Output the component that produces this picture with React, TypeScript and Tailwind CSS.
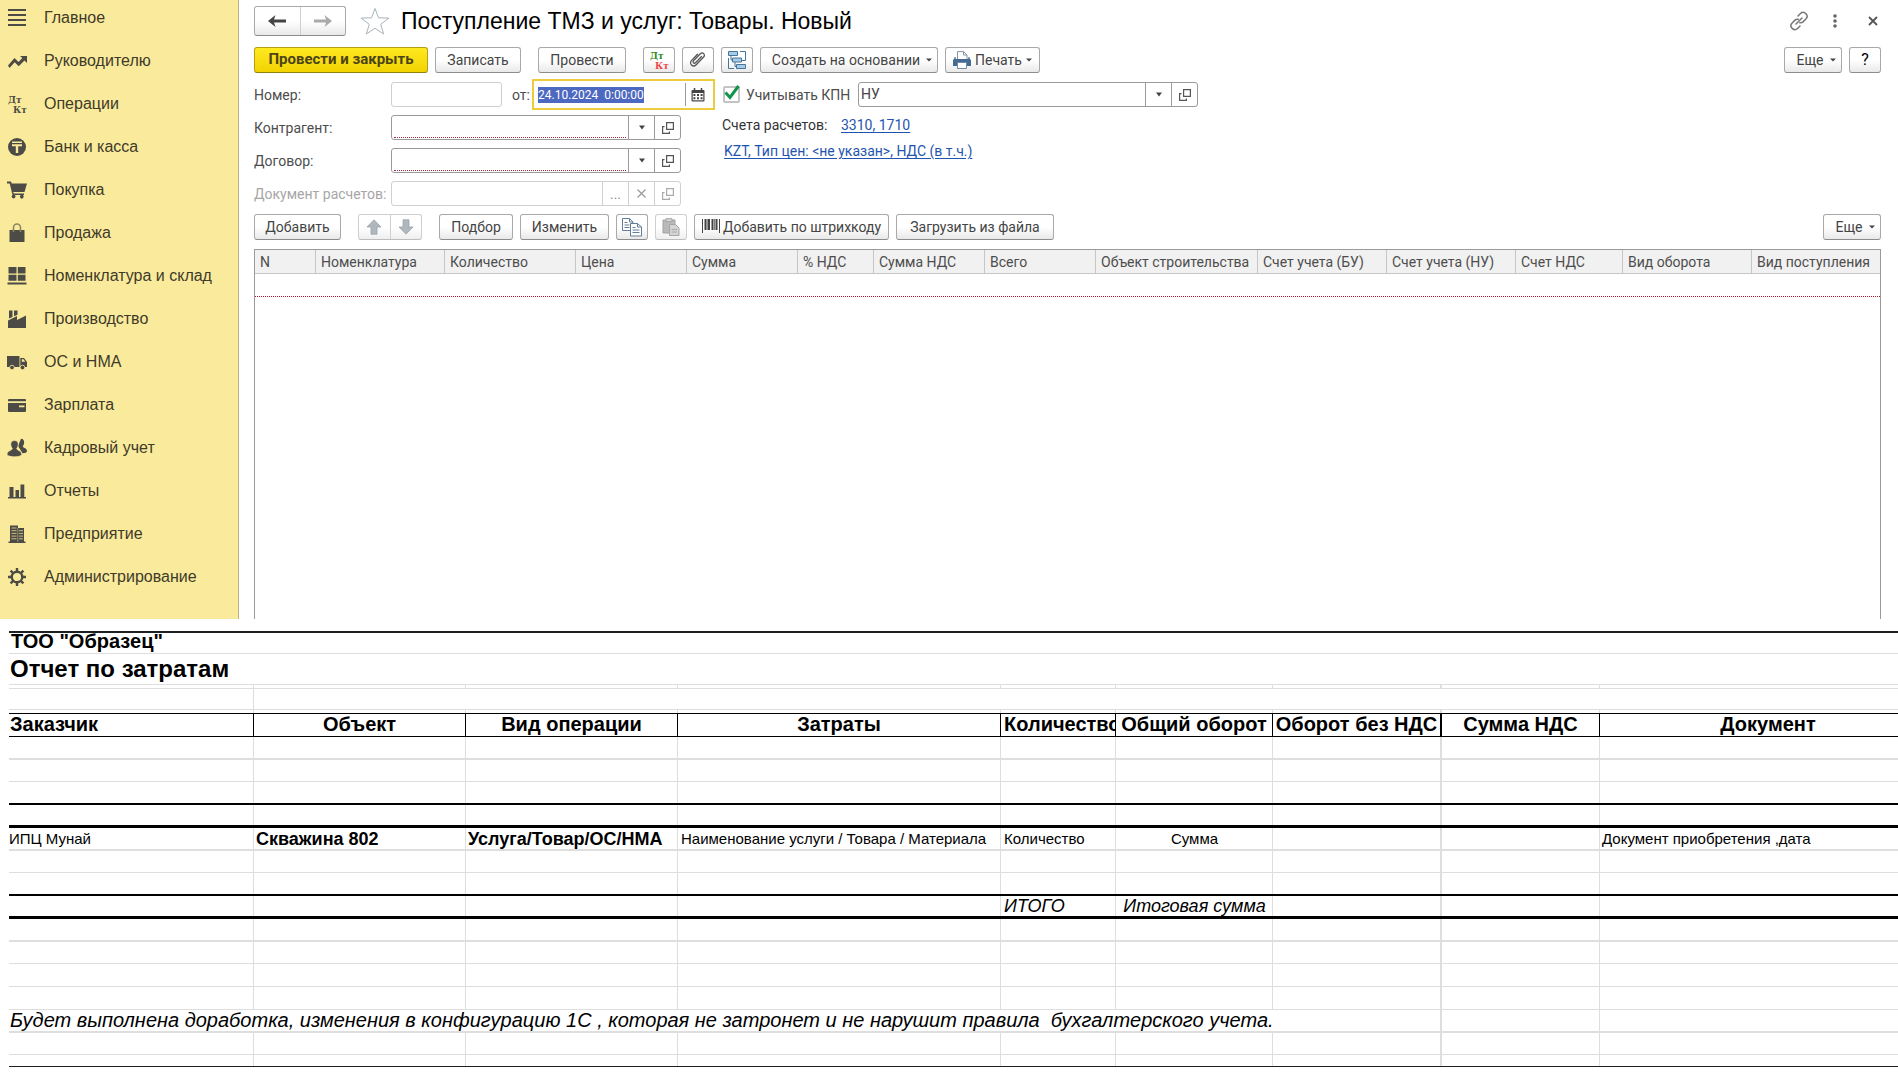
import { useEffect, useRef } from 'react'
import type { ReactNode } from 'react'

const BTN = 'flex h-[26px] shrink-0 items-center justify-center rounded-[3px] border border-[#a9a9a9] border-b-[#8c8c8c] bg-linear-to-b from-white from-50% to-[#e9e9e9] whitespace-nowrap text-[#444]'
const BTN_OFF = 'flex h-[26px] shrink-0 items-center justify-center rounded-[3px] border border-[#cfcfcf] border-b-[#bdbdbd] bg-linear-to-b from-white from-50% to-[#efefef]'

function MenuIcon({ children }: { children: ReactNode }) {
  return (
    <svg viewBox="0 0 20 20" className="h-5 w-5 shrink-0" fill="#4d4b45" aria-hidden="true">
      {children}
    </svg>
  )
}

const menu: { label: string, icon: ReactNode }[] = [
  { label: 'Главное', icon: <path d="M1 1h18v2H1zM1 6h18v2H1zM1 11h18v2H1zM1 16h18v2H1z" /> },
  { label: 'Руководителю', icon: <path d="M1 14.500 7.500 7l4 4 3.800-3.900L13 5h7v7l-2.500-2.500-5.800 5.700-4-4L2.500 17z" /> },
  {
    label: 'Операции',
    icon: (
      <g fontFamily='"DejaVu Serif", "Liberation Serif", serif' fontSize="9" fontWeight="700">
        <text x="1" y="9">Дт</text>
        <text x="6" y="19">Кт</text>
      </g>
    ),
  },
  {
    label: 'Банк и касса',
    icon: (
      <>
        <circle cx="10" cy="10" r="9" />
        <path d="M5 4.500h10V6H5zM5 7.200h10v2h-3.800V16H8.800V9.200H5z" fill="#faeb9c" />
      </>
    ),
  },
  { label: 'Покупка', icon: <path d="M0 1.500h4l.8 2H20l-2.500 8.500H6.200l.5 1.500H17V15h-1.200a1.900 1.900 0 1 1-2 0H7.700a1.900 1.900 0 1 1-2.200 0L2.700 3.500H0z" /> },
  {
    label: 'Продажа',
    icon: (
      <>
        <path d="M2.500 7h15v12h-15z" />
        <path d="M6.500 9V4.500a3.500 3.500 0 0 1 7 0V9" fill="none" stroke="#8e865f" strokeWidth="1.600" />
      </>
    ),
  },
  { label: 'Номенклатура и склад', icon: <path d="M1.500 1h8v6.500h-8zM10.800 1h7.700v6.500h-7.700zM1.500 8.800h8v6h-8zM10.800 8.800h7.700v6h-7.700zM.5 16.500h19v2H.5z" /> },
  { label: 'Производство', icon: <path d="M2 1.500h3.500V8L2 9.500zM7 1.500h3.500v4.200L7 7.200zM1 11.500l9-4.500v4l9-4.500V19H1z" /> },
  {
    label: 'ОС и НМА',
    icon: (
      <>
        <path d="M0 4h12.500v11H0z" />
        <path d="M13.300 6h3.700l3 4v5h-6.700z" />
        <path d="M14.800 7.300h1.700l1.700 2.500h-3.400z" fill="#faeb9c" />
        <circle cx="5" cy="15.500" r="2.300" stroke="#faeb9c" strokeWidth="0.800" />
        <circle cx="15.500" cy="15.500" r="2.300" stroke="#faeb9c" strokeWidth="0.800" />
      </>
    ),
  },
  { label: 'Зарплата', icon: <path fillRule="evenodd" d="M2 4h16a1 1 0 0 1 1 1v1.200H1V5a1 1 0 0 1 1-1zM1 8h18v8a1 1 0 0 1-1 1H2a1 1 0 0 1-1-1zM12 10.500v1.700h5.500v-1.700z" /> },
  {
    label: 'Кадровый учет',
    icon: (
      <>
        <path d="M14 .8c2.300 0 3.400 1.700 3.100 4-.2 1.800-.8 2.800-1.400 3.500 0 1.500 4.300 1.800 4.300 4.700 0 1.500-2 2.300-4.500 2.200L11 8z" />
        <path d="M7.500 2.500c2.700 0 4 1.800 3.700 4.300-.2 1.800-.9 3-1.500 3.700 0 2 5 2 5 5.500 0 1.800-3 2.800-7.200 2.800S0 17.800 0 16c0-3.500 5.300-3.500 5.300-5.500-.7-.7-1.300-1.900-1.500-3.700-.3-2.500 1-4.300 3.700-4.300z" stroke="#faeb9c" strokeWidth="0.700" />
      </>
    ),
  },
  { label: 'Отчеты', icon: <path d="M2.500 6h4v10h-4zM8.500 9h3.500v7H8.500zM13.500 3.500h3.800V16h-3.800zM1 16h18v1.500H1z" /> },
  {
    label: 'Предприятие',
    icon: (
      <>
        <path d="M3 1.500h8V4h6v13.500h1.500V19H1.500v-1.500H3z" />
        <path d="M4.500 4h5M4.500 6.700h5M4.500 9.400h5M4.500 12.100h5M4.500 14.800h5M12 6.700h4M12 9.400h4M12 12.100h4M12 14.800h4" stroke="#c9be83" strokeWidth="1" />
        <path d="M10.800 4v14" stroke="#c9be83" strokeWidth="0.600" />
      </>
    ),
  },
  {
    label: 'Администрирование',
    icon: (
      <>
        <circle cx="10" cy="10" r="5.300" fill="none" stroke="#4d4b45" strokeWidth="2.400" />
        <path d="M10 1v3.500M10 15.500V19M1 10h3.500M15.500 10H19M3.600 3.600 6 6M14 14l2.400 2.400M3.600 16.400 6 14M14 6l2.400-2.400" stroke="#4d4b45" strokeWidth="2.400" />
      </>
    ),
  },
]

const columns: [string, number][] = [
  ['N', 61], ['Номенклатура', 129], ['Количество', 131], ['Цена', 111], ['Сумма', 111],
  ['% НДС', 76], ['Сумма НДС', 111], ['Всего', 111], ['Объект строительства', 162],
  ['Счет учета (БУ)', 129], ['Счет учета (НУ)', 129], ['Счет НДС', 107], ['Вид оборота', 129], ['Вид поступления', 128],
]

function Caret() {
  return <svg viewBox="0 0 6 4" className="h-1 w-1.5 shrink-0" fill="#444" aria-hidden="true"><path d="M0 .5h6L3 3.500z" /></svg>
}

function OpenIcon({ color = '#555' }: { color?: string }) {
  return (
    <svg viewBox="0 0 14 14" className="h-3.5 w-3.5" fill="none" stroke={color} strokeWidth="1.200" aria-hidden="true">
      <path d="M5.600 1.600h6.800v6.800H5.600zM3.500 5.600H1.600v6.800h6.800v-1.900" />
    </svg>
  )
}

function ComboField({ id, label, value, required, className }: {
  id: string, label: string, value?: string, required?: boolean, className: string
}) {
  return (
    <div className={`flex h-[25px] rounded-[3px] border border-[#9b9b9b] ${className}`}>
      <div className="flex min-w-0 flex-1 px-0.5 pb-px">
        <input id={id} aria-label={label} defaultValue={value}
          className={`w-full min-w-0 bg-transparent text-[#444] outline-none ${required ? 'border-b border-dotted border-[#a3283c]' : ''}`} />
      </div>
      <button aria-label={`${label}: выбрать из списка`} className="flex w-[26px] items-center justify-center border-l border-[#9b9b9b]">
        <svg viewBox="0 0 8 5" className="h-[5px] w-2" fill="#444" aria-hidden="true"><path d="M1 .5h6L4 4.500z" /></svg>
      </button>
      <button aria-label={`${label}: открыть`} className="flex w-[26px] items-center justify-center border-l border-[#9b9b9b]">
        <OpenIcon />
      </button>
    </div>
  )
}

function DtKtIcon() {
  return (
    <svg viewBox="0 0 20 20" className="h-5 w-5" fontFamily='"DejaVu Serif", "Liberation Serif", serif' fontSize="9" fontWeight="700" aria-hidden="true">
      <text x="1" y="9" fill="#2f8a1f">Дт</text>
      <text x="6" y="19" fill="#f0474b">Кт</text>
    </svg>
  )
}

function CommandBar() {
  return (
    <div className="mt-[11px] flex gap-[7px]">
      <button className="flex h-[26px] w-[174px] shrink-0 items-center justify-center rounded-[3px] border border-[#b79f14] border-b-[#94800c] bg-linear-to-b from-[#ffe91f] to-[#f2d300] text-[15px] font-bold whitespace-nowrap text-[#4b4417]">
        Провести и закрыть
      </button>
      <button className={`${BTN} w-[86px]`}>Записать</button>
      <button className={`${BTN} ml-2.5 w-[88px]`}>Провести</button>
      <button aria-label="Движения документа" className={`${BTN} ml-2.5 w-8`}><DtKtIcon /></button>
      <button aria-label="Присоединенные файлы" className={`${BTN} w-8`}>
        <svg viewBox="0 0 18 18" className="h-[18px] w-[18px]" fill="none" stroke="#555" strokeWidth="1.300" strokeLinecap="round" aria-hidden="true">
          <path d="m12.500 5.500-6 6.200c-1.400 1.500-3.400-.4-2-1.900l6.800-7c2.300-2.300 5.600.8 3.300 3.200l-7.400 7.700c-3.200 3.200-7.700-1-4.600-4.300l5.900-6.100" />
        </svg>
      </button>
      <button aria-label="Структура подчиненности" className={`${BTN} w-8`}>
        <svg viewBox="0 0 20 20" className="h-5 w-5" fill="#a5cbe6" stroke="#47749b" strokeWidth="1" aria-hidden="true">
          <path d="M1.500 1.500h9v4h-9zM5.500 8h9v4h-9zM9.500 14.500h9v4h-9z" />
          <path d="M13 1.500h5.500v9M18.500 10.500H15M1.500 8v10.500H7M4 5.500V10h1.500M8 12v4.500h1.500" fill="none" />
        </svg>
      </button>
      <button className={`${BTN} w-[178px] gap-1.5 pl-1.5`}>Создать на основании <Caret /></button>
      <button className={`${BTN} w-[95px] gap-1`}>
        <svg viewBox="0 0 18 18" className="h-[18px] w-[18px]" aria-hidden="true">
          <path d="M4.500 8V.6h6L14 4v4" fill="#fff" stroke="#8296a8" />
          <path d="M10.500.6V4H14" fill="none" stroke="#8296a8" />
          <path d="M0 9.500a1.500 1.500 0 0 1 1.500-1.500h15A1.500 1.500 0 0 1 18 9.500V15H0z" fill="#436a92" />
          <path d="M2 8.500V6.300M16 8.500V6.300" stroke="#436a92" strokeWidth="1.500" />
          <path d="M4.500 11.500h9v6h-9z" fill="#fff" stroke="#6f8ba6" />
        </svg>
        Печать <Caret />
      </button>
      <button className={`${BTN} ml-auto w-[58px] gap-1.5 pl-1.5`}>Еще <Caret /></button>
      <button aria-label="Справка" className={`${BTN} w-8 text-base text-black`}>?</button>
    </div>
  )
}

function DocumentFields() {
  const dateRef = useRef<HTMLInputElement>(null)

  // the date opens focused with its whole value selected
  useEffect(() => {
    dateRef.current?.focus()
    dateRef.current?.select()
  }, [])

  return (
    <div className="mt-[9px] flex gap-[7px]">
      <div className="flex w-[461px] shrink-0 flex-col gap-2">
        <div className="flex h-[25px] items-center">
          <label htmlFor="number" className="w-[137px] shrink-0">Номер:</label>
          <input id="number" className="h-[25px] w-[111px] rounded-[3px] border border-[#cfcfcf] px-1 outline-none" />
          <label htmlFor="date" className="w-[30px] shrink-0 pl-2.5">от:</label>
          <div className="-my-[3px] flex h-[31px] flex-1 items-center border-2 border-[#eecb3c] pl-1">
            <input id="date" ref={dateRef} defaultValue="24.10.2024  0:00:00"
              className="w-full min-w-0 flex-1 bg-transparent text-xs outline-none selection:bg-[#4c68c0] selection:text-white" />
            <button aria-label="Открыть календарь" className="flex h-[23px] w-7 items-center justify-center border-l border-[#9b9b9b] pr-1">
              <svg viewBox="0 0 14 14" className="h-3.5 w-3.5" aria-hidden="true">
                <path d="M1.500 2h11a1 1 0 0 1 1 1v9.500a1 1 0 0 1-1 1h-11a1 1 0 0 1-1-1V3a1 1 0 0 1 1-1z" fill="#444" />
                <path d="M3.500 0v3M10.500 0v3" stroke="#444" strokeWidth="1.500" />
                <path d="M1.700 5h10.600v7.300H1.700z" fill="#fff" />
                <path d="M2.400 7h9.200M2.400 10.300h9.200" stroke="#444" strokeWidth="2" strokeDasharray="2 1.600" />
              </svg>
            </button>
          </div>
        </div>
        <div className="flex h-[25px] items-center">
          <label htmlFor="partner" className="w-[137px] shrink-0">Контрагент:</label>
          <ComboField id="partner" label="Контрагент" required className="w-[290px]" />
        </div>
        <div className="flex h-[25px] items-center">
          <label htmlFor="contract" className="w-[137px] shrink-0">Договор:</label>
          <ComboField id="contract" label="Договор" required className="w-[290px]" />
        </div>
        <div className="flex h-[25px] items-center">
          <label htmlFor="settlement" className="w-[137px] shrink-0 whitespace-nowrap text-[#a6a6a6]">Документ расчетов:</label>
          <div className="flex h-[25px] w-[290px] rounded-[3px] border border-[#d0d0d0] text-[#8c8c8c]">
            <input id="settlement" disabled className="w-full min-w-0 flex-1 px-1" />
            <button disabled aria-label="Выбрать" className="w-[26px] border-l border-[#d0d0d0]">...</button>
            <button disabled aria-label="Очистить" className="flex w-[26px] items-center justify-center border-l border-[#d0d0d0]">
              <svg viewBox="0 0 9 9" className="h-[9px] w-[9px]" stroke="#999" strokeWidth="1.200" aria-hidden="true"><path d="m.5.5 8 8M8.500.5l-8 8" /></svg>
            </button>
            <button disabled aria-label="Открыть" className="flex w-[26px] items-center justify-center border-l border-[#d0d0d0]">
              <OpenIcon color="#aaa" />
            </button>
          </div>
        </div>
      </div>

      <div className="min-w-0 flex-1">
        <div className="flex h-[25px] items-center">
          <div className="relative ml-px h-[17px] w-[17px] shrink-0">
            <input id="kpn" type="checkbox" defaultChecked className="peer block h-[17px] w-[17px] appearance-none rounded-[2px] border-2 border-[#c4c4c4] bg-white" />
            <svg viewBox="0 0 17 17" className="pointer-events-none absolute -top-px left-0 hidden h-[17px] w-[17px] peer-checked:block" fill="none" stroke="#12924b" strokeWidth="3" aria-hidden="true">
              <path d="M2.500 7.500 7 12.500 15.500 1" />
            </svg>
          </div>
          <label htmlFor="kpn" className="w-[118px] shrink-0 pl-1.5 whitespace-nowrap">Учитывать КПН</label>
          <ComboField id="tax" label="Вид учета" value="НУ" className="w-[340px]" />
        </div>
        <div className="mt-2 flex h-5 items-center">
          <span className="w-[119px] text-[#333]">Счета расчетов:</span>
          <a href="#accounts" className="text-[#1f55b0] underline underline-offset-2">3310, 1710</a>
        </div>
        <div className="mt-1.5 flex h-5 items-center pl-0.5">
          <a href="#prices" className="text-[#1f55b0] underline underline-offset-2">KZT, Тип цен: &lt;не указан&gt;, НДС (в т.ч.)</a>
        </div>
      </div>
    </div>
  )
}

function TableBar() {
  return (
    <div className="mt-2 flex gap-[7px]">
      <button className={`${BTN} w-[87px]`}>Добавить</button>
      <div className={`${BTN_OFF} ml-2.5 w-16`}>
        <button disabled aria-label="Переместить вверх" className="flex h-full flex-1 items-center justify-center border-r border-[#cfcfcf]">
          <svg viewBox="0 0 16 16" className="h-4 w-4" fill="#b0b8be" stroke="#9aa3aa" strokeWidth="0.800" aria-hidden="true"><path d="M8 .8 15 8h-4v7.200H5V8H1z" /></svg>
        </button>
        <button disabled aria-label="Переместить вниз" className="flex h-full flex-1 items-center justify-center">
          <svg viewBox="0 0 16 16" className="h-4 w-4" fill="#b0b8be" stroke="#9aa3aa" strokeWidth="0.800" aria-hidden="true"><path d="M8 15.200 15 8h-4V.8H5V8H1z" /></svg>
        </button>
      </div>
      <button className={`${BTN} ml-2.5 w-[74px]`}>Подбор</button>
      <button className={`${BTN} w-[89px]`}>Изменить</button>
      <button aria-label="Копировать строки" className={`${BTN} w-8`}>
        <svg viewBox="0 0 20 20" className="h-5 w-5" fill="#fff" stroke="#637d96" strokeWidth="1" aria-hidden="true">
          <path d="M.5 1.500h7l3.500 3.500v8.500H.5z" />
          <path d="M7.500 1.500V5H11M2.500 5.500h3M2.500 8h5M2.500 10.500h5" fill="none" />
          <path d="M8.500 6.500h7L19.500 10v9h-11z" />
          <path d="M15.500 6.500V10h4M10.500 10.500h3M10.500 13h7M10.500 15.500h7" fill="none" />
        </svg>
      </button>
      <button disabled aria-label="Вставить строки" className={`${BTN_OFF} w-8`}>
        <svg viewBox="0 0 18 18" className="h-[18px] w-[18px]" aria-hidden="true">
          <path d="M1 2h12v13H1z" fill="#b9b9b9" stroke="#a2a2a2" />
          <path d="M4 .7h6v3H4z" fill="#d6d6d6" stroke="#a2a2a2" />
          <path d="M7.500 6.500h6l3.500 3.500v7.500H7.500z" fill="#d4d4d4" stroke="#a5a5a5" />
          <path d="M9.500 11.500h5.500M9.500 14h5.500" stroke="#aaa" />
        </svg>
      </button>
      <button className={`${BTN} w-[195px] gap-[3px]`}>
        <svg viewBox="0 0 18 18" className="h-[18px] w-[18px]" stroke="#444" aria-hidden="true">
          <path d="M.5 1v14M17.500 1v14" strokeWidth="1" />
          <path d="M3.500 1v11M7 1v11M10.500 1v11M14.500 1v11" strokeWidth="2" />
          <path d="M5.300 1v11M12.500 1v11" strokeWidth="0.700" />
        </svg>
        Добавить по штрихкоду
      </button>
      <button className={`${BTN} w-[158px]`}>Загрузить из файла</button>
      <button className={`${BTN} ml-auto w-[58px] gap-1.5 pl-1.5`}>Еще <Caret /></button>
    </div>
  )
}

function DocumentForm() {
  return (
    <main className="flex min-w-0 flex-1 flex-col pt-1.5 pr-[17px] pl-[15px] font-[Roboto,'Liberation_Sans',sans-serif] text-sm text-[#4d4d4d]">
      <div className="flex h-[30px] items-center">
        <div className="flex h-[30px] w-[92px] rounded-[3px] border border-[#a9a9a9] border-b-[#8c8c8c] bg-linear-to-b from-white from-50% to-[#e9e9e9]">
          <button aria-label="Назад" className="flex flex-1 items-center justify-center border-r border-[#cfcfcf]">
            <svg viewBox="0 0 18 12" className="h-3 w-[18px]" fill="#444" aria-hidden="true"><path d="M0 6 7.500 0 6 4.500h12v3H6L7.500 12z" /></svg>
          </button>
          <button aria-label="Вперед" className="flex flex-1 items-center justify-center">
            <svg viewBox="0 0 18 12" className="h-3 w-[18px]" fill="#aaa" aria-hidden="true"><path d="M18 6 10.500 0 12 4.500H0v3h12L10.500 12z" /></svg>
          </button>
        </div>
        <button aria-label="В избранное" className="ml-3.5">
          <svg viewBox="0 0 30 28" className="h-7 w-[30px]" fill="#fff" stroke="#aab3bb" strokeWidth="1" aria-hidden="true">
            <path d="m15 1.500 3.500 9.300 10.500.3-8.300 6.200 3 9.700L15 21.300 6.300 27l3-9.700L1 11.100l10.500-.3z" />
          </svg>
        </button>
        <h1 className="ml-[11px] font-['Liberation_Sans',sans-serif] text-[23px] leading-7 whitespace-nowrap text-black">Поступление ТМЗ и услуг: Товары. Новый</h1>
        <div className="ml-auto flex items-center">
          <button aria-label="Получить ссылку">
            <svg viewBox="0 0 20 20" className="h-5 w-5" fill="none" stroke="#777" strokeWidth="1.500" strokeLinecap="round" aria-hidden="true">
              <path d="m9 5 2.500-2.500c3.400-3.300 8.800 1.800 5.600 5.300L14 10.900c-1 .9-2.100 1.100-3.200.8M11 15l-2.500 2.500c-3.400 3.300-8.800-1.800-5.600-5.300L6 9.100c1-.9 2.100-1.100 3.200-.8M7 13l6-6" />
            </svg>
          </button>
          <button aria-label="Меню формы" className="ml-6">
            <svg viewBox="0 0 4 14" className="h-3.5 w-1" fill="#666" aria-hidden="true"><circle cx="2" cy="2" r="1.800" /><circle cx="2" cy="7" r="1.800" /><circle cx="2" cy="12" r="1.800" /></svg>
          </button>
          <button aria-label="Закрыть" className="mr-[3px] ml-[31px]">
            <svg viewBox="0 0 10 10" className="h-2.5 w-2.5" stroke="#555" strokeWidth="1.800" aria-hidden="true"><path d="m1 1 8 8M9 1 1 9" /></svg>
          </button>
        </div>
      </div>

      <CommandBar />
      <DocumentFields />
      <TableBar />

      <div className="mt-[9px] h-[370px] border border-b-0 border-[#9b9b9b]">
        <table className="w-full table-fixed border-separate border-spacing-0">
          <colgroup>{columns.map(([name, w]) => <col key={name} style={{ width: w }} />)}</colgroup>
          <thead>
            <tr>
              {columns.map(([name]) => (
                <th key={name} className="h-6 overflow-hidden border-r border-b border-[#c6c6c6] bg-[#f1f1f1] p-0 pl-[5px] text-left font-normal whitespace-nowrap last:border-r-0">{name}</th>
              ))}
            </tr>
          </thead>
          <tbody>
            <tr><td colSpan={columns.length} className="h-[23px] border-b border-dotted border-[#b5182d] p-0" /></tr>
          </tbody>
        </table>
      </div>
    </main>
  )
}

// inset shadows keep the column rules from notching the thick row rules
const V = 'shadow-[inset_-1px_0_0_#dedede]'
const V2 = 'shadow-[inset_-2px_0_0_#dedede]'

const THIN = 'border-b border-b-[#dedede]'
const WIDE = 'border-b-2 border-b-[#dedede]'
const BLACK2 = 'border-b-2 border-b-black'
const BLACK3 = 'border-b-3 border-b-black'

// one line of the sheet; `line` is the rule under it, `cells` maps a column index to its text
function SheetRow({ height, line, cells = {}, cellClass = {} }: {
  height: string, line: string, cells?: Record<number, string>, cellClass?: Record<number, string>
}) {
  return (
    <tr>
      {Array.from({ length: 9 }, (_, i) => (
        <td key={i} className={`${height} ${i === 6 ? V2 : i === 8 ? '' : V} ${line} overflow-hidden p-0 leading-5 whitespace-nowrap ${cellClass[i] ?? ''}`}>
          {cells[i]}
        </td>
      ))}
    </tr>
  )
}

const heads = ['Заказчик', 'Объект', 'Вид операции', 'Затраты', 'Количество', 'Общий оборот', 'Оборот без НДС', 'Сумма НДС', 'Документ']

function CostReport() {
  return (
    <section className="mt-3 pb-[11px] pl-[9px] font-['Liberation_Sans',Arial,sans-serif] text-black">
      <table className="w-full table-fixed border-separate border-spacing-0 border-t-2 border-[#1e2124]">
        <colgroup>
          <col className="w-[245px]" />
          <col className="w-[212px]" />
          <col className="w-[212px]" />
          <col className="w-[323px]" />
          <col className="w-[115px]" />
          <col className="w-[157px]" />
          <col className="w-[169px]" />
          <col className="w-[158px]" />
          <col />
        </colgroup>
        <tbody>
          <tr><td colSpan={9} className={`h-[21px] p-0 pl-0.5 align-top text-xl leading-4 font-bold ${THIN}`}>ТОО "Образец"</td></tr>
          <tr><td colSpan={9} className={`h-[31px] p-0 pl-px text-2xl leading-[30px] font-bold ${THIN}`}>Отчет по затратам</td></tr>
          <SheetRow height="h-1" line={THIN} />
          <tr>
            <td className={`h-[21px] p-0 ${V} ${THIN}`} />
            <td colSpan={8} className={`p-0 ${THIN}`} />
          </tr>
          <SheetRow height="h-1" line="border-b border-b-black" />
          <tr>
            {heads.map((h, i) => (
              <th key={h} className={`h-[23px] overflow-hidden border-b border-black p-0 align-top text-xl leading-5 whitespace-nowrap ${i === 6 ? 'border-r-2' : i === 8 ? 'pl-[38px]' : 'border-r'} ${i === 0 ? 'pl-px text-left' : ''} ${i === 4 ? 'pl-[3px] text-left' : ''}`}>{h}</th>
            ))}
          </tr>
          <SheetRow height="h-[23px]" line={WIDE} />
          <SheetRow height="h-[22px]" line={THIN} />
          <SheetRow height="h-[23px]" line={BLACK2} />
          <SheetRow height="h-[23px]" line={BLACK3} />
          <SheetRow height="h-[23px]" line={WIDE}
            cells={{ 0: 'ИПЦ Мунай', 1: 'Скважина 802', 2: 'Услуга/Товар/ОС/НМА', 3: 'Наименование услуги / Товара / Материала', 4: 'Количество', 5: 'Сумма', 8: 'Документ приобретения ,дата' }}
            cellClass={{ 0: 'text-[15px]', 1: 'pl-0.5 text-lg font-bold', 2: 'pl-0.5 text-lg font-bold', 3: 'pl-[3px] text-[15px]', 4: 'pl-[3px] text-[15px]', 5: 'text-center text-[15px]', 8: 'pl-0.5 text-[15px]' }} />
          <SheetRow height="h-[22px]" line={THIN} />
          <SheetRow height="h-[23px]" line={BLACK2} />
          <SheetRow height="h-[23px]" line={BLACK3}
            cells={{ 4: 'ИТОГО', 5: 'Итоговая сумма' }}
            cellClass={{ 4: 'pl-[3px] text-lg italic', 5: 'text-center text-lg italic' }} />
          <SheetRow height="h-[23px]" line={WIDE} />
          <SheetRow height="h-[22px]" line={THIN} />
          <SheetRow height="h-[23px]" line={THIN} />
          <SheetRow height="h-[23px]" line={THIN} />
          <tr>
            <td colSpan={7} className={`h-[23px] p-0 pl-px align-top text-xl leading-5 whitespace-pre italic ${V2} ${WIDE}`}>
              {'Будет выполнена доработка, изменения в конфигурацию 1С , которая не затронет и не нарушит правила  бухгалтерского учета.'}
            </td>
            <td className={`p-0 ${V} ${WIDE}`} />
            <td className={`p-0 ${WIDE}`} />
          </tr>
          <SheetRow height="h-[22px]" line={THIN} />
          <SheetRow height="h-3" line="border-b border-b-[#1e2124]" />
        </tbody>
      </table>
    </section>
  )
}

export default function App() {
  return (
    <div className="min-h-screen bg-white">
      <div className="flex">
        <nav className="w-[239px] shrink-0 border-r border-[#b9af82] bg-[#faeb9c] pt-1 pl-[7px] font-['Liberation_Sans',Arial,sans-serif] text-base text-[#3f3a2a]">
          <ul className="flex flex-col gap-[15px]">
            {menu.map(item => (
              <li key={item.label}>
                <a href="#" className="flex h-7 items-center gap-[17px] whitespace-nowrap">
                  <MenuIcon>{item.icon}</MenuIcon>
                  {item.label}
                </a>
              </li>
            ))}
          </ul>
        </nav>
        <DocumentForm />
      </div>
      <CostReport />
    </div>
  )
}
